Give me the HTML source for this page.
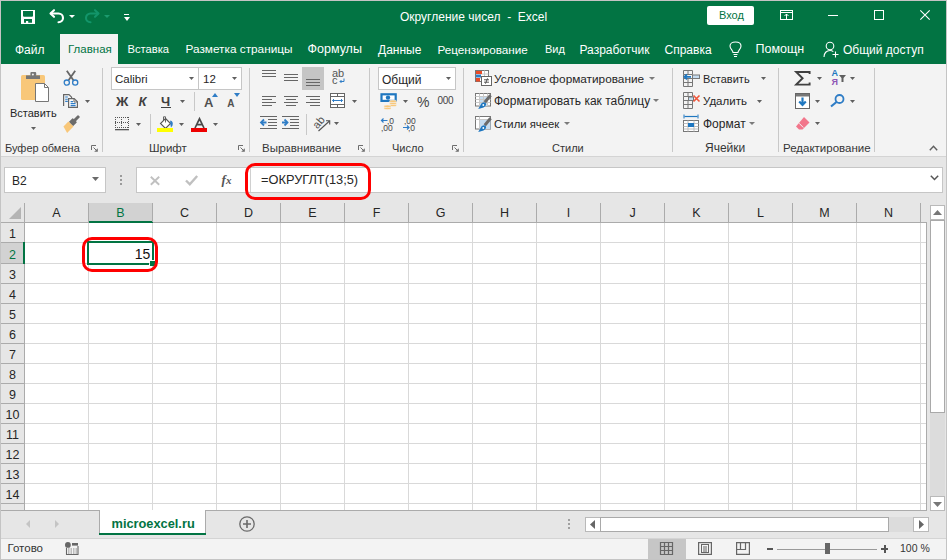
<!DOCTYPE html>
<html><head><meta charset="utf-8">
<style>
*{margin:0;padding:0;box-sizing:border-box}
html,body{width:947px;height:560px;overflow:hidden;background:#e6e6e6;font-family:"Liberation Sans",sans-serif;position:relative}
.a{position:absolute}
svg.a{overflow:visible}
.t{position:absolute;white-space:nowrap;line-height:1}
.box{position:absolute;background:#fff;border:1px solid #c6c6c6}
</style></head><body>
<div class="a" style="left:0px;top:0px;width:947px;height:1px;background:#c4c4c4;"></div>
<div class="a" style="left:0px;top:0px;width:1px;height:560px;background:#c4c4c4;"></div>
<div class="a" style="left:946px;top:0px;width:1px;height:560px;background:#c4c4c4;"></div>
<div class="a" style="left:1px;top:1px;width:945px;height:63px;background:#027443;"></div>
<div class="a" style="left:60px;top:34px;width:58px;height:30px;background:#f3f3f3;"></div>
<svg class="a" style="left:21px;top:10px;" width="14" height="14" viewBox="0 0 14 14"><rect x="0" y="0" width="14" height="14" fill="#fff"/><path d="M2 1H12V6L11.3 6.7H2.7L2 6Z" fill="#027443"/><path d="M3 9H11V12.8H7.2V11H5V12.8H3Z" fill="#027443"/></svg>
<svg class="a" style="left:49px;top:9px;" width="16" height="14" viewBox="0 0 16 14"><path d="M5 1.2L1.5 4.5L5 7.8" fill="none" stroke="#fff" stroke-width="2.1" stroke-linejoin="round" stroke-linecap="round"/><path d="M2 4.5H9.5C12 4.5 14 6.5 14 9C14 11.5 12 13.2 9.5 13.2" fill="none" stroke="#fff" stroke-width="2.1" stroke-linecap="round"/></svg>
<svg class="a" style="left:68.5px;top:15px;" width="6" height="3" viewBox="0 0 6 3"><path d="M0 0H6L3.0 3Z" fill="#fff"/></svg>
<svg class="a" style="left:84px;top:9px;" width="16" height="14" viewBox="0 0 16 14"><path d="M11 1.2L14.5 4.5L11 7.8" fill="none" stroke="#13956a" stroke-width="2.1" stroke-linejoin="round" stroke-linecap="round"/><path d="M14 4.5H6.5C4 4.5 2 6.5 2 9C2 11.5 4 13.2 6.5 13.2" fill="none" stroke="#13956a" stroke-width="2.1" stroke-linecap="round"/></svg>
<svg class="a" style="left:103.5px;top:15px;" width="6" height="3" viewBox="0 0 6 3"><path d="M0 0H6L3.0 3Z" fill="#1c9a6e"/></svg>
<div class="a" style="left:124px;top:14px;width:5px;height:1px;background:#fff;"></div>
<svg class="a" style="left:123.5px;top:16.5px;" width="6" height="4" viewBox="0 0 6 4"><path d="M0 0H6L3.0 4Z" fill="#fff"/></svg>
<div class="t" style="left:400px;top:10.84px;font-size:12px;color:#fff;">Округление чисел &nbsp;-&nbsp; Excel</div>
<div class="a" style="left:707px;top:6px;width:47px;height:19px;background:#fff;border-radius:2px"></div>
<div class="t" style="left:719px;top:10.19px;font-size:11px;color:#027443;">Вход</div>
<svg class="a" style="left:780px;top:10px;" width="13" height="10" viewBox="0 0 13 10"><rect x="0.5" y="0.5" width="12" height="9" fill="none" stroke="#fff"/><path d="M0.5 2.5H12.5" stroke="#fff"/><path d="M6.5 4V9.5" stroke="#fff"/><path d="M4.5 6L6.5 4L8.5 6" fill="none" stroke="#fff"/></svg>
<div class="a" style="left:828px;top:15px;width:10px;height:1px;background:#fff;"></div>
<svg class="a" style="left:874px;top:10px;" width="10" height="10" viewBox="0 0 10 10"><rect x="0.5" y="0.5" width="9" height="9" fill="none" stroke="#fff"/></svg>
<svg class="a" style="left:920px;top:10px;" width="10" height="10" viewBox="0 0 10 10"><path d="M0.3 0.3L9.7 9.7M9.7 0.3L0.3 9.7" stroke="#fff" stroke-width="1.1"/></svg>
<div class="t" style="left:15px;top:43.54px;font-size:12px;color:#fff;">Файл</div>
<div class="t" style="left:68px;top:43.97px;font-size:11.5px;color:#027443;">Главная</div>
<div class="t" style="left:127.5px;top:44.22px;font-size:11.2px;color:#fff;">Вставка</div>
<div class="t" style="left:185.5px;top:43.71px;font-size:11.8px;color:#fff;">Разметка страницы</div>
<div class="t" style="left:307.5px;top:43.12px;font-size:12.5px;color:#fff;">Формулы</div>
<div class="t" style="left:378px;top:43.54px;font-size:12px;color:#fff;">Данные</div>
<div class="t" style="left:437.5px;top:43.80px;font-size:11.7px;color:#fff;">Рецензирование</div>
<div class="t" style="left:545px;top:44.39px;font-size:11px;color:#fff;">Вид</div>
<div class="t" style="left:579.5px;top:43.54px;font-size:12px;color:#fff;">Разработчик</div>
<div class="t" style="left:664.5px;top:43.54px;font-size:12px;color:#fff;">Справка</div>
<div class="t" style="left:755.5px;top:43.12px;font-size:12.5px;color:#fff;">Помощн</div>
<div class="t" style="left:843px;top:43.54px;font-size:12px;color:#fff;">Общий доступ</div>
<svg class="a" style="left:729px;top:41px;" width="13" height="17" viewBox="0 0 13 17"><path d="M4 11.5C4 9.5 1 8 1 5C1 2.8 3 1 6.5 1C10 1 12 2.8 12 5C12 8 9 9.5 9 11.5Z" fill="none" stroke="#fff" stroke-width="1.1"/><path d="M4.5 13.5H8.5M5 15.5H8" stroke="#fff" stroke-width="1.1"/></svg>
<svg class="a" style="left:823px;top:41px;" width="17" height="17" viewBox="0 0 17 17"><circle cx="7" cy="5" r="3.8" fill="none" stroke="#fff" stroke-width="1.1"/><path d="M1 16C1 12 3.5 9.5 7 9.5C8.5 9.5 9.5 10 10.3 10.6" fill="none" stroke="#fff" stroke-width="1.1"/><path d="M12.5 10.5V16.5M9.5 13.5H15.5" stroke="#fff" stroke-width="1.1"/></svg>
<div class="a" style="left:1px;top:64px;width:945px;height:92px;background:#f3f3f3;"></div>
<div class="a" style="left:1px;top:156px;width:945px;height:1px;background:#d4d4d4;"></div>
<div class="a" style="left:102px;top:68px;width:1px;height:84px;background:#c8c8c8;"></div>
<div class="a" style="left:249px;top:68px;width:1px;height:84px;background:#c8c8c8;"></div>
<div class="a" style="left:369px;top:68px;width:1px;height:84px;background:#c8c8c8;"></div>
<div class="a" style="left:463px;top:68px;width:1px;height:84px;background:#c8c8c8;"></div>
<div class="a" style="left:672px;top:68px;width:1px;height:84px;background:#c8c8c8;"></div>
<div class="a" style="left:778px;top:68px;width:1px;height:84px;background:#c8c8c8;"></div>
<div class="a" style="left:874px;top:68px;width:1px;height:84px;background:#c8c8c8;"></div>
<div class="t" style="left:5px;top:143.19px;font-size:11px;color:#363636;">Буфер обмена</div>
<svg class="a" style="left:91px;top:145px;" width="7" height="7" viewBox="0 0 7 7"><path d="M0.5 5V0.5H5" fill="none" stroke="#6d6d6d"/><path d="M2.5 2.5L6 6" stroke="#6d6d6d"/><path d="M6.8 3.2V6.8H3.2Z" fill="#6d6d6d"/></svg>
<div class="t" style="left:149px;top:142.77px;font-size:11.5px;color:#363636;">Шрифт</div>
<svg class="a" style="left:238px;top:145px;" width="7" height="7" viewBox="0 0 7 7"><path d="M0.5 5V0.5H5" fill="none" stroke="#6d6d6d"/><path d="M2.5 2.5L6 6" stroke="#6d6d6d"/><path d="M6.8 3.2V6.8H3.2Z" fill="#6d6d6d"/></svg>
<div class="t" style="left:262px;top:142.77px;font-size:11.5px;color:#363636;">Выравнивание</div>
<svg class="a" style="left:358px;top:145px;" width="7" height="7" viewBox="0 0 7 7"><path d="M0.5 5V0.5H5" fill="none" stroke="#6d6d6d"/><path d="M2.5 2.5L6 6" stroke="#6d6d6d"/><path d="M6.8 3.2V6.8H3.2Z" fill="#6d6d6d"/></svg>
<div class="t" style="left:392px;top:143.19px;font-size:11px;color:#363636;">Число</div>
<svg class="a" style="left:452px;top:145px;" width="7" height="7" viewBox="0 0 7 7"><path d="M0.5 5V0.5H5" fill="none" stroke="#6d6d6d"/><path d="M2.5 2.5L6 6" stroke="#6d6d6d"/><path d="M6.8 3.2V6.8H3.2Z" fill="#6d6d6d"/></svg>
<div class="t" style="left:552px;top:143.19px;font-size:11px;color:#363636;">Стили</div>
<div class="t" style="left:705px;top:142.34px;font-size:12px;color:#363636;">Ячейки</div>
<div class="t" style="left:783px;top:142.77px;font-size:11.5px;color:#363636;">Редактирование</div>
<svg class="a" style="left:929px;top:145px;" width="9" height="6" viewBox="0 0 9 6"><path d="M0.8 5.2L4.5 1.2L8.2 5.2" fill="none" stroke="#5f5f5f" stroke-width="1.4"/></svg>
<svg class="a" style="left:20px;top:71px;" width="30" height="32" viewBox="0 0 30 32"><rect x="1" y="4" width="24" height="25" rx="1.6" fill="#f8c779"/><rect x="6" y="4.4" width="14" height="3.6" fill="#767676"/><rect x="10.4" y="1" width="5.8" height="4" rx="1" fill="#767676"/><circle cx="12.9" cy="3.6" r="1" fill="#f3f3f3"/><path d="M15.5 12.5H24.5L28.5 16.5V30.5H15.5Z" fill="#fff" stroke="#767676"/><path d="M24.5 12.5V16.5H28.5" fill="none" stroke="#767676"/></svg>
<div class="t" style="left:10px;top:107.69px;font-size:11px;color:#262626;">Вставить</div>
<svg class="a" style="left:31.0px;top:127px;" width="5" height="3" viewBox="0 0 5 3"><path d="M0 0H5L2.5 3Z" fill="#5f5f5f"/></svg>
<svg class="a" style="left:63px;top:70px;" width="16" height="16" viewBox="0 0 16 16"><path d="M3.8 0.8L10.6 10.6M12.2 0.8L5.4 10.6" stroke="#666" stroke-width="1.8"/><circle cx="3.8" cy="12.6" r="2.6" fill="none" stroke="#2f7dc6" stroke-width="1.3"/><circle cx="12.2" cy="12.6" r="2.6" fill="none" stroke="#2f7dc6" stroke-width="1.3"/></svg>
<svg class="a" style="left:63px;top:94px;" width="15" height="14" viewBox="0 0 15 14"><path d="M0.6 12V0.6H6L8.6 3.2V4.5" fill="none" stroke="#666" stroke-width="1.2"/><path d="M2.2 3H4.8M2.2 5.2H4.8M2.2 7.4H4.8" stroke="#2f7dc6" stroke-width="1.1"/><path d="M5.6 4.6H11.2L14.4 7.8V13.4H5.6Z" fill="#fff" stroke="#666" stroke-width="1.2"/><path d="M11 4.6V8H14.4" fill="none" stroke="#666" stroke-width="1"/><path d="M7.6 7.6H10M7.6 9.6H12.6M7.6 11.6H12.6" stroke="#2f7dc6" stroke-width="1.1"/></svg>
<svg class="a" style="left:85.0px;top:100px;" width="5" height="3" viewBox="0 0 5 3"><path d="M0 0H5L2.5 3Z" fill="#5f5f5f"/></svg>
<svg class="a" style="left:63px;top:116px;" width="17" height="15" viewBox="0 0 17 15"><g transform="translate(9,7) rotate(-45)"><rect x="3.5" y="-1.5" width="6.5" height="3" rx="0.8" fill="#6b6b6b"/><rect x="-1.5" y="-3" width="5.5" height="6" rx="0.6" fill="#6b6b6b"/><path d="M-1.5 -3.6H-8.5L-10.5 3.6H-1.5Z" fill="#f8c779"/></g></svg>
<div class="box" style="left:111px;top:67px;width:88px;height:23px"></div>
<div class="box" style="left:198px;top:67px;width:44px;height:23px"></div>
<div class="t" style="left:115px;top:74.27px;font-size:11.5px;color:#262626;">Calibri</div>
<svg class="a" style="left:189.0px;top:77px;" width="5" height="3" viewBox="0 0 5 3"><path d="M0 0H5L2.5 3Z" fill="#5f5f5f"/></svg>
<div class="t" style="left:203px;top:74.27px;font-size:11.5px;color:#262626;">12</div>
<svg class="a" style="left:232.0px;top:77px;" width="5" height="3" viewBox="0 0 5 3"><path d="M0 0H5L2.5 3Z" fill="#5f5f5f"/></svg>
<div class="t" style="left:115.5px;top:95.00px;font-size:13px;color:#404040;font-weight:bold;transform:scaleX(1.05);transform-origin:0 0">Ж</div>
<div class="t" style="left:138.5px;top:95.00px;font-size:13px;color:#404040;font-style:italic;font-weight:bold">К</div>
<div class="t" style="left:161px;top:95.00px;font-size:13px;color:#404040;font-weight:bold">Ч</div>
<div class="a" style="left:161px;top:107px;width:10px;height:1.3px;background:#404040;"></div>
<svg class="a" style="left:180.0px;top:100px;" width="5" height="3" viewBox="0 0 5 3"><path d="M0 0H5L2.5 3Z" fill="#5f5f5f"/></svg>
<div class="a" style="left:194px;top:92px;width:1px;height:19px;background:#c8c8c8;"></div>
<div class="t" style="left:204px;top:96.00px;font-size:13px;color:#505050;font-weight:bold">A</div>
<svg class="a" style="left:212px;top:93px;" width="6" height="4" viewBox="0 0 6 4"><path d="M0 4L3 0L6 4Z" fill="#2f7dc6"/></svg>
<div class="t" style="left:227.2px;top:98.53px;font-size:10px;color:#505050;font-weight:bold">A</div>
<svg class="a" style="left:234px;top:93px;" width="6" height="4" viewBox="0 0 6 4"><path d="M0 0L6 0L3 4Z" fill="#2f7dc6"/></svg>
<svg class="a" style="left:115px;top:117px;" width="14" height="14" viewBox="0 0 14 14"><rect x="0" y="0" width="1" height="1" fill="#555"/><rect x="2" y="0" width="1" height="1" fill="#555"/><rect x="4" y="0" width="1" height="1" fill="#555"/><rect x="6" y="0" width="1" height="1" fill="#555"/><rect x="8" y="0" width="1" height="1" fill="#555"/><rect x="10" y="0" width="1" height="1" fill="#555"/><rect x="12" y="0" width="1" height="1" fill="#555"/><rect x="0" y="5" width="1" height="1" fill="#555"/><rect x="2" y="5" width="1" height="1" fill="#555"/><rect x="4" y="5" width="1" height="1" fill="#555"/><rect x="6" y="5" width="1" height="1" fill="#555"/><rect x="8" y="5" width="1" height="1" fill="#555"/><rect x="10" y="5" width="1" height="1" fill="#555"/><rect x="12" y="5" width="1" height="1" fill="#555"/><rect x="0" y="10" width="1" height="1" fill="#555"/><rect x="2" y="10" width="1" height="1" fill="#555"/><rect x="4" y="10" width="1" height="1" fill="#555"/><rect x="6" y="10" width="1" height="1" fill="#555"/><rect x="8" y="10" width="1" height="1" fill="#555"/><rect x="10" y="10" width="1" height="1" fill="#555"/><rect x="12" y="10" width="1" height="1" fill="#555"/><rect x="0" y="0" width="1" height="1" fill="#555"/><rect x="0" y="2" width="1" height="1" fill="#555"/><rect x="0" y="4" width="1" height="1" fill="#555"/><rect x="0" y="6" width="1" height="1" fill="#555"/><rect x="0" y="8" width="1" height="1" fill="#555"/><rect x="0" y="10" width="1" height="1" fill="#555"/><rect x="6" y="0" width="1" height="1" fill="#555"/><rect x="6" y="2" width="1" height="1" fill="#555"/><rect x="6" y="4" width="1" height="1" fill="#555"/><rect x="6" y="6" width="1" height="1" fill="#555"/><rect x="6" y="8" width="1" height="1" fill="#555"/><rect x="6" y="10" width="1" height="1" fill="#555"/><rect x="13" y="0" width="1" height="1" fill="#555"/><rect x="13" y="2" width="1" height="1" fill="#555"/><rect x="13" y="4" width="1" height="1" fill="#555"/><rect x="13" y="6" width="1" height="1" fill="#555"/><rect x="13" y="8" width="1" height="1" fill="#555"/><rect x="13" y="10" width="1" height="1" fill="#555"/><rect x="0" y="12" width="14" height="1.3" fill="#555"/></svg>
<svg class="a" style="left:136.0px;top:123px;" width="5" height="3" viewBox="0 0 5 3"><path d="M0 0H5L2.5 3Z" fill="#5f5f5f"/></svg>
<div class="a" style="left:150px;top:114px;width:1px;height:20px;background:#c8c8c8;"></div>
<svg class="a" style="left:157px;top:115px;" width="17" height="17" viewBox="0 0 17 17"><path d="M8.5 3.5L13.5 8.5L8.5 13.5L3.5 8.5Z" fill="#fff" stroke="#555" stroke-width="1.1"/><path d="M6.5 5.5V1.8H8.5V7.5" fill="none" stroke="#555" stroke-width="0.9"/><path d="M13.2 5.5C15.5 5.8 16.4 8 15.4 10.8L14 12.5L13.2 8.5Z" fill="#2f7dc6"/><rect x="0" y="13" width="16" height="4" fill="#ffff00"/></svg>
<svg class="a" style="left:179.0px;top:123px;" width="5" height="3" viewBox="0 0 5 3"><path d="M0 0H5L2.5 3Z" fill="#5f5f5f"/></svg>
<svg class="a" style="left:194px;top:117.5px;" width="11" height="10" viewBox="0 0 11 10"><path d="M1 10L5.5 0.8L10 10M2.8 6.6H8.2" fill="none" stroke="#4a4a4a" stroke-width="1.7"/></svg>
<div class="a" style="left:191px;top:128px;width:16px;height:4px;background:#ee0000;"></div>
<svg class="a" style="left:213.0px;top:123px;" width="5" height="3" viewBox="0 0 5 3"><path d="M0 0H5L2.5 3Z" fill="#5f5f5f"/></svg>
<div class="a" style="left:262px;top:70px;width:14px;height:1px;background:#666;"></div>
<div class="a" style="left:262px;top:73px;width:14px;height:1px;background:#666;"></div>
<div class="a" style="left:262px;top:76px;width:14px;height:1px;background:#666;"></div>
<div class="a" style="left:284px;top:74px;width:14px;height:1px;background:#666;"></div>
<div class="a" style="left:284px;top:77px;width:14px;height:1px;background:#666;"></div>
<div class="a" style="left:284px;top:80px;width:14px;height:1px;background:#666;"></div>
<div class="a" style="left:302px;top:67px;width:22px;height:23px;background:#c5c5c5;"></div>
<div class="a" style="left:306px;top:79px;width:14px;height:1px;background:#666;"></div>
<div class="a" style="left:306px;top:82px;width:14px;height:1px;background:#666;"></div>
<div class="a" style="left:306px;top:85px;width:14px;height:1px;background:#666;"></div>
<div class="t" style="left:332px;top:67.69px;font-size:11px;color:#555;">ab</div>
<div class="t" style="left:332px;top:75.19px;font-size:11px;color:#555;">c</div>
<svg class="a" style="left:339px;top:78px;" width="6" height="6" viewBox="0 0 6 6"><path d="M5 0.5V3.5H1M2.5 2L1 3.5L2.5 5" fill="none" stroke="#2f7dc6" stroke-width="1"/></svg>
<div class="a" style="left:262px;top:96px;width:14px;height:1px;background:#666;"></div>
<div class="a" style="left:262px;top:99px;width:10px;height:1px;background:#666;"></div>
<div class="a" style="left:262px;top:102px;width:14px;height:1px;background:#666;"></div>
<div class="a" style="left:262px;top:105px;width:10px;height:1px;background:#666;"></div>
<div class="a" style="left:284px;top:96px;width:14px;height:1px;background:#666;"></div>
<div class="a" style="left:286px;top:99px;width:10px;height:1px;background:#666;"></div>
<div class="a" style="left:284px;top:102px;width:14px;height:1px;background:#666;"></div>
<div class="a" style="left:286px;top:105px;width:10px;height:1px;background:#666;"></div>
<div class="a" style="left:306px;top:96px;width:14px;height:1px;background:#666;"></div>
<div class="a" style="left:310px;top:99px;width:10px;height:1px;background:#666;"></div>
<div class="a" style="left:306px;top:102px;width:14px;height:1px;background:#666;"></div>
<div class="a" style="left:310px;top:105px;width:10px;height:1px;background:#666;"></div>
<svg class="a" style="left:330px;top:93px;" width="15" height="15" viewBox="0 0 15 15"><rect x="0.5" y="0.5" width="14" height="14" fill="#fff" stroke="#666"/><path d="M0.5 3.5H14.5M0.5 11.5H14.5M7.5 0.5V3.5M7.5 11.5V14.5" stroke="#666"/><path d="M2.5 7.5H12.5" stroke="#2f7dc6"/><path d="M4 6L2.5 7.5L4 9M11 6L12.5 7.5L11 9" fill="none" stroke="#2f7dc6"/></svg>
<svg class="a" style="left:352.0px;top:100px;" width="5" height="3" viewBox="0 0 5 3"><path d="M0 0H5L2.5 3Z" fill="#5f5f5f"/></svg>
<svg class="a" style="left:260px;top:116px;" width="17" height="14" viewBox="0 0 17 14"><path d="M0 0.5H17M8 3.5H17M8 6.5H17M8 9.5H17M0 12.5H17" stroke="#666"/><path d="M1.5 6.5H6.5" stroke="#2f7dc6" stroke-width="2"/><path d="M4 3.5L1 6.5L4 9.5" fill="none" stroke="#2f7dc6" stroke-width="1.8"/></svg>
<svg class="a" style="left:282px;top:116px;" width="17" height="14" viewBox="0 0 17 14"><path d="M0 0.5H17M8 3.5H17M8 6.5H17M8 9.5H17M0 12.5H17" stroke="#666"/><path d="M0 6.5H5" stroke="#2f7dc6" stroke-width="2"/><path d="M2.5 3.5L5.5 6.5L2.5 9.5" fill="none" stroke="#2f7dc6" stroke-width="1.8"/></svg>
<div class="a" style="left:306px;top:114px;width:1px;height:21px;background:#c8c8c8;"></div>
<svg class="a" style="left:314px;top:116px;" width="17" height="15" viewBox="0 0 17 15"><text x="0" y="0" font-family="Liberation Sans" font-size="11" fill="#505050" transform="translate(3.5,13.5) rotate(-50)">ab</text><path d="M4.5 15L15.5 5" stroke="#505050" stroke-width="1.1"/><path d="M12 4.8H15.7V8.5" fill="none" stroke="#505050" stroke-width="1.1"/></svg>
<svg class="a" style="left:334.0px;top:122px;" width="5" height="3" viewBox="0 0 5 3"><path d="M0 0H5L2.5 3Z" fill="#5f5f5f"/></svg>
<div class="box" style="left:378px;top:67px;width:78px;height:23px"></div>
<div class="t" style="left:382px;top:73.84px;font-size:12px;color:#262626;">Общий</div>
<svg class="a" style="left:446.0px;top:77px;" width="5" height="3" viewBox="0 0 5 3"><path d="M0 0H5L2.5 3Z" fill="#5f5f5f"/></svg>
<svg class="a" style="left:380px;top:93px;" width="18" height="17" viewBox="0 0 18 17"><rect x="1.5" y="1.3" width="14.2" height="6.6" fill="#fff" stroke="#1f77c0" stroke-width="2.2"/><circle cx="8" cy="4.6" r="2.2" fill="#1f77c0"/><g fill="#f8c779" stroke="#f3f3f3" stroke-width="0.6"><ellipse cx="13" cy="12.3" rx="3.6" ry="1.3"/><ellipse cx="13" cy="10.3" rx="3.6" ry="1.3"/><ellipse cx="13" cy="8.3" rx="3.6" ry="1.3"/><ellipse cx="7.5" cy="15.3" rx="3.6" ry="1.3"/><ellipse cx="7.5" cy="13.3" rx="3.6" ry="1.3"/></g></svg>
<svg class="a" style="left:403.0px;top:100px;" width="5" height="3" viewBox="0 0 5 3"><path d="M0 0H5L2.5 3Z" fill="#5f5f5f"/></svg>
<div class="t" style="left:417px;top:94.65px;font-size:14px;color:#444;">%</div>
<div class="t" style="left:437.5px;top:95.53px;font-size:10px;color:#444;transform:scaleY(1.05);transform-origin:0 100%;letter-spacing:-0.3px">000</div>
<div class="t" style="left:387px;top:116.80px;font-size:8.5px;color:#444;">,0</div>
<div class="t" style="left:381px;top:123.80px;font-size:8.5px;color:#444;">,00</div>
<svg class="a" style="left:381px;top:118px;" width="7" height="5" viewBox="0 0 7 5"><path d="M0.5 2.5H6.5M2.5 0.5L0.5 2.5L2.5 4.5" fill="none" stroke="#2f7dc6" stroke-width="1.2"/></svg>
<div class="t" style="left:404px;top:116.80px;font-size:8.5px;color:#444;">,00</div>
<div class="t" style="left:408px;top:123.80px;font-size:8.5px;color:#444;">,0</div>
<svg class="a" style="left:403px;top:125px;" width="7" height="5" viewBox="0 0 7 5"><path d="M0 2.5H6M4 0.5L6 2.5L4 4.5" fill="none" stroke="#2f7dc6" stroke-width="1.2"/></svg>
<svg class="a" style="left:475px;top:70px;" width="17" height="16" viewBox="0 0 17 16"><rect x="0.5" y="0.5" width="13" height="11" fill="#fff" stroke="#777"/><path d="M5 4H13.5M5 8H13.5M9.5 0.5V11.5" stroke="#c8c8c8"/><rect x="1" y="1" width="6" height="3" fill="#ea4b27"/><rect x="1" y="4.5" width="5" height="3" fill="#2f7dc6"/><rect x="1" y="8" width="4" height="3.5" fill="#ea4b27"/><rect x="6.5" y="6.5" width="10" height="9" fill="#fff" stroke="#666"/><path d="M9 9.8H14M9 12.2H14M12.5 8.3L10.5 13.7" stroke="#444" stroke-width="0.9"/></svg>
<div class="t" style="left:494px;top:73.51px;font-size:11.8px;color:#262626;">Условное форматирование</div>
<svg class="a" style="left:649.0px;top:77px;" width="6" height="3" viewBox="0 0 6 3"><path d="M0 0H6L3.0 3Z" fill="#7a7a7a"/></svg>
<svg class="a" style="left:475px;top:93px;" width="17" height="17" viewBox="0 0 17 17"><rect x="0.5" y="0.5" width="15" height="12.5" fill="#fff" stroke="#777"/><rect x="4.5" y="3.5" width="8" height="9.5" fill="#c5dcf0"/><path d="M0.5 3.5H15.5M0.5 6.5H15.5M0.5 9.5H15.5M4.5 0.5V13M8.5 0.5V13M12.5 0.5V13" stroke="#c8c8c8"/><path d="M15.6 2.2L9.8 9.2" stroke="#6b6b6b" stroke-width="3"/><path d="M10.8 10.2C9.6 8.6 7.2 9.2 6 11.2L3.2 16C5.8 15.7 8.3 15 9.8 13.6C11 12.5 11.4 11.2 10.8 10.2Z" fill="#1f77c0"/><circle cx="8.3" cy="12" r="0.9" fill="#fff"/></svg>
<div class="t" style="left:494px;top:95.34px;font-size:12px;color:#262626;">Форматировать как таблицу</div>
<svg class="a" style="left:652.5px;top:99px;" width="6" height="3" viewBox="0 0 6 3"><path d="M0 0H6L3.0 3Z" fill="#7a7a7a"/></svg>
<svg class="a" style="left:475px;top:116px;" width="17" height="17" viewBox="0 0 17 17"><rect x="0.5" y="0.5" width="15" height="12.5" fill="#fff" stroke="#777"/><rect x="4.5" y="3.5" width="11" height="9.5" fill="#c5dcf0"/><path d="M0.5 3.5H15.5M4.5 0.5V13" stroke="#c8c8c8"/><path d="M15.6 2.2L9.8 9.2" stroke="#6b6b6b" stroke-width="3"/><path d="M10.8 10.2C9.6 8.6 7.2 9.2 6 11.2L3.2 16C5.8 15.7 8.3 15 9.8 13.6C11 12.5 11.4 11.2 10.8 10.2Z" fill="#1f77c0"/><circle cx="8.3" cy="12" r="0.9" fill="#fff"/></svg>
<div class="t" style="left:494px;top:119.43px;font-size:11.3px;color:#262626;">Стили ячеек</div>
<svg class="a" style="left:564.0px;top:122px;" width="6" height="3" viewBox="0 0 6 3"><path d="M0 0H6L3.0 3Z" fill="#7a7a7a"/></svg>
<svg class="a" style="left:683px;top:70px;" width="17" height="17" viewBox="0 0 17 17"><path d="M0.5 0.5H9.5V4.5H0.5ZM0.5 4.5V16.5H9.5V8.5M0.5 12.5H9.5M0.5 8.5H9.5M5 0.5V4.5M5 8.5V16.5" fill="none" stroke="#777"/><rect x="9.5" y="5" width="7" height="3.5" fill="#c5dcf0" stroke="#777"/><path d="M1.5 6.8H8M4 4.3L1.5 6.8L4 9.3" fill="none" stroke="#1f77c0" stroke-width="1.8"/></svg>
<div class="t" style="left:703px;top:73.69px;font-size:11px;color:#262626;">Вставить</div>
<svg class="a" style="left:761.0px;top:77px;" width="5" height="3" viewBox="0 0 5 3"><path d="M0 0H5L2.5 3Z" fill="#5f5f5f"/></svg>
<svg class="a" style="left:683px;top:92px;" width="17" height="17" viewBox="0 0 17 17"><path d="M0.5 0.5H9.5V4.5H0.5ZM0.5 4.5V16.5H9.5V8.5M0.5 12.5H9.5M0.5 8.5H9.5M5 0.5V4.5M5 8.5V16.5" fill="none" stroke="#777"/><rect x="5.5" y="5" width="5" height="3.5" fill="#c5dcf0" stroke="#777"/><path d="M10.5 3.5L16.5 9.5M16.5 3.5L10.5 9.5" stroke="#f0553a" stroke-width="1.6"/></svg>
<div class="t" style="left:703px;top:95.77px;font-size:11.5px;color:#262626;">Удалить</div>
<svg class="a" style="left:757.0px;top:100px;" width="5" height="3" viewBox="0 0 5 3"><path d="M0 0H5L2.5 3Z" fill="#5f5f5f"/></svg>
<svg class="a" style="left:683px;top:114px;" width="17" height="18" viewBox="0 0 17 18"><path d="M1.5 2.5H14.5" stroke="#1f77c0" stroke-width="1.2"/><path d="M1 0.5V4.5M15 0.5V4.5" stroke="#1f77c0"/><rect x="0.5" y="6.5" width="15" height="11" fill="#fff" stroke="#777"/><path d="M0.5 9.5H15.5M0.5 12.5H15.5M0.5 15H15.5M5 6.5V17.5M11 6.5V17.5" stroke="#bdbdbd"/><rect x="5" y="9" width="6" height="4" fill="#1f77c0"/></svg>
<div class="t" style="left:703px;top:118.34px;font-size:12px;color:#262626;">Формат</div>
<svg class="a" style="left:749.0px;top:122px;" width="6" height="3" viewBox="0 0 6 3"><path d="M0 0H6L3.0 3Z" fill="#7a7a7a"/></svg>
<svg class="a" style="left:795px;top:71px;" width="16" height="14" viewBox="0 0 16 14"><path d="M14.6 3V1H1.2L7.6 7.2L1.2 13.6H14.6V11.6" fill="none" stroke="#404040" stroke-width="1.9"/></svg>
<svg class="a" style="left:817.0px;top:77px;" width="5" height="3" viewBox="0 0 5 3"><path d="M0 0H5L2.5 3Z" fill="#5f5f5f"/></svg>
<div class="t" style="left:831.5px;top:69.38px;font-size:9px;color:#1f77c0;font-weight:bold">A</div>
<div class="t" style="left:831.5px;top:78.38px;font-size:9px;color:#8e55b5;font-weight:bold">Я</div>
<svg class="a" style="left:839px;top:75px;" width="7" height="7" viewBox="0 0 7 7"><path d="M0 0H7L4.5 3V7H2.5V3Z" fill="#5f5f5f"/></svg>
<svg class="a" style="left:850.0px;top:77px;" width="5" height="3" viewBox="0 0 5 3"><path d="M0 0H5L2.5 3Z" fill="#5f5f5f"/></svg>
<svg class="a" style="left:795px;top:93px;" width="15" height="16" viewBox="0 0 15 16"><rect x="0.5" y="0.5" width="14" height="15" fill="#fff" stroke="#666"/><rect x="1" y="1" width="13" height="2.5" fill="#777"/><path d="M7.5 4.5V12M4.2 8.5L7.5 12L10.8 8.5" fill="none" stroke="#1f77c0" stroke-width="2.2"/></svg>
<svg class="a" style="left:815.0px;top:100px;" width="5" height="3" viewBox="0 0 5 3"><path d="M0 0H5L2.5 3Z" fill="#5f5f5f"/></svg>
<svg class="a" style="left:830px;top:94px;" width="15" height="13" viewBox="0 0 15 13"><circle cx="9.5" cy="5" r="4" fill="none" stroke="#2f7dc6" stroke-width="1.8"/><path d="M6.5 8L1 12.5" stroke="#2f7dc6" stroke-width="2.2"/></svg>
<svg class="a" style="left:850.0px;top:100px;" width="5" height="3" viewBox="0 0 5 3"><path d="M0 0H5L2.5 3Z" fill="#5f5f5f"/></svg>
<svg class="a" style="left:795px;top:116px;" width="15" height="14" viewBox="0 0 15 14"><path d="M9 1L14.5 6.5L7.5 13.5H4L1 10.5Z" fill="#f2768b"/><path d="M4 7.2L8.3 11.5" stroke="#f3f3f3" stroke-width="1"/></svg>
<svg class="a" style="left:815.0px;top:122px;" width="5" height="3" viewBox="0 0 5 3"><path d="M0 0H5L2.5 3Z" fill="#5f5f5f"/></svg>
<div class="box" style="left:4px;top:167px;width:102px;height:26px"></div>
<div class="t" style="left:12px;top:174.84px;font-size:12px;color:#262626;">B2</div>
<svg class="a" style="left:92.0px;top:177px;" width="7" height="4" viewBox="0 0 7 4"><path d="M0 0H7L3.5 4Z" fill="#6a6a6a"/></svg>
<div class="a" style="left:120px;top:175px;width:2px;height:2px;background:#9a9a9a;"></div>
<div class="a" style="left:120px;top:179px;width:2px;height:2px;background:#9a9a9a;"></div>
<div class="a" style="left:120px;top:183px;width:2px;height:2px;background:#9a9a9a;"></div>
<div class="box" style="left:136px;top:167px;width:807px;height:26px"></div>
<div class="a" style="left:250px;top:168px;width:1px;height:24px;background:#d0d0d0;"></div>
<svg class="a" style="left:150px;top:175.5px;" width="10" height="9.5" viewBox="0 0 10 9.5"><path d="M0.8 0.8L9.2 8.7M9.2 0.8L0.8 8.7" stroke="#c0c0c0" stroke-width="1.9"/></svg>
<svg class="a" style="left:185px;top:175px;" width="13" height="11" viewBox="0 0 13 11"><path d="M1 5.5L4.8 9.3L12.2 1" fill="none" stroke="#c0c0c0" stroke-width="2.4"/></svg>
<div class="t" style="left:221.5px;top:172.50px;font-size:13px;color:#555;font-family:'Liberation Serif';font-style:italic;font-weight:bold">f</div>
<div class="t" style="left:226px;top:175.19px;font-size:11px;color:#555;font-family:'Liberation Serif';font-style:italic;font-weight:bold">x</div>
<div class="t" style="left:261px;top:173.66px;font-size:12.8px;color:#262626;">=ОКРУГЛТ(13;5)</div>
<svg class="a" style="left:930px;top:175px;" width="9" height="6" viewBox="0 0 9 6"><path d="M0.8 0.8L4.5 4.5L8.2 0.8" fill="none" stroke="#555" stroke-width="1.5"/></svg>
<svg class="a" style="left:9px;top:207px;" width="12" height="12" viewBox="0 0 12 12"><path d="M12 0V12H0Z" fill="#b4b4b4"/></svg>
<div class="a" style="left:24px;top:203px;width:1px;height:308px;background:#ababab;"></div>
<div class="a" style="left:1px;top:222px;width:926px;height:1px;background:#ababab;"></div>
<div class="a" style="left:88px;top:203px;width:1px;height:19px;background:#ababab;"></div>
<div class="t" style="left:25px;top:207.42px;width:63px;text-align:center;font-size:12.5px;color:#262626">A</div>
<div class="a" style="left:89px;top:203px;width:63px;height:19px;background:#d2d2d2;"></div>
<div class="a" style="left:89px;top:221px;width:64px;height:2px;background:#027443;"></div>
<div class="a" style="left:152px;top:203px;width:1px;height:19px;background:#ababab;"></div>
<div class="t" style="left:89px;top:207.42px;width:63px;text-align:center;font-size:12.5px;color:#027443">B</div>
<div class="a" style="left:216px;top:203px;width:1px;height:19px;background:#ababab;"></div>
<div class="t" style="left:153px;top:207.42px;width:63px;text-align:center;font-size:12.5px;color:#262626">C</div>
<div class="a" style="left:280px;top:203px;width:1px;height:19px;background:#ababab;"></div>
<div class="t" style="left:217px;top:207.42px;width:63px;text-align:center;font-size:12.5px;color:#262626">D</div>
<div class="a" style="left:344px;top:203px;width:1px;height:19px;background:#ababab;"></div>
<div class="t" style="left:281px;top:207.42px;width:63px;text-align:center;font-size:12.5px;color:#262626">E</div>
<div class="a" style="left:408px;top:203px;width:1px;height:19px;background:#ababab;"></div>
<div class="t" style="left:345px;top:207.42px;width:63px;text-align:center;font-size:12.5px;color:#262626">F</div>
<div class="a" style="left:472px;top:203px;width:1px;height:19px;background:#ababab;"></div>
<div class="t" style="left:409px;top:207.42px;width:63px;text-align:center;font-size:12.5px;color:#262626">G</div>
<div class="a" style="left:536px;top:203px;width:1px;height:19px;background:#ababab;"></div>
<div class="t" style="left:473px;top:207.42px;width:63px;text-align:center;font-size:12.5px;color:#262626">H</div>
<div class="a" style="left:600px;top:203px;width:1px;height:19px;background:#ababab;"></div>
<div class="t" style="left:537px;top:207.42px;width:63px;text-align:center;font-size:12.5px;color:#262626">I</div>
<div class="a" style="left:664px;top:203px;width:1px;height:19px;background:#ababab;"></div>
<div class="t" style="left:601px;top:207.42px;width:63px;text-align:center;font-size:12.5px;color:#262626">J</div>
<div class="a" style="left:728px;top:203px;width:1px;height:19px;background:#ababab;"></div>
<div class="t" style="left:665px;top:207.42px;width:63px;text-align:center;font-size:12.5px;color:#262626">K</div>
<div class="a" style="left:792px;top:203px;width:1px;height:19px;background:#ababab;"></div>
<div class="t" style="left:729px;top:207.42px;width:63px;text-align:center;font-size:12.5px;color:#262626">L</div>
<div class="a" style="left:856px;top:203px;width:1px;height:19px;background:#ababab;"></div>
<div class="t" style="left:793px;top:207.42px;width:63px;text-align:center;font-size:12.5px;color:#262626">M</div>
<div class="a" style="left:920px;top:203px;width:1px;height:19px;background:#ababab;"></div>
<div class="t" style="left:857px;top:207.42px;width:63px;text-align:center;font-size:12.5px;color:#262626">N</div>
<div class="a" style="left:25px;top:223px;width:901px;height:287px;background:#fff;"></div>
<div class="a" style="left:1px;top:242px;width:24px;height:1px;background:#ababab;"></div>
<div class="a" style="left:25px;top:242px;width:901px;height:1px;background:#d9d9d9;"></div>
<div class="a" style="left:1px;top:263px;width:24px;height:1px;background:#ababab;"></div>
<div class="a" style="left:25px;top:263px;width:901px;height:1px;background:#d9d9d9;"></div>
<div class="a" style="left:1px;top:283px;width:24px;height:1px;background:#ababab;"></div>
<div class="a" style="left:25px;top:283px;width:901px;height:1px;background:#d9d9d9;"></div>
<div class="a" style="left:1px;top:303px;width:24px;height:1px;background:#ababab;"></div>
<div class="a" style="left:25px;top:303px;width:901px;height:1px;background:#d9d9d9;"></div>
<div class="a" style="left:1px;top:323px;width:24px;height:1px;background:#ababab;"></div>
<div class="a" style="left:25px;top:323px;width:901px;height:1px;background:#d9d9d9;"></div>
<div class="a" style="left:1px;top:343px;width:24px;height:1px;background:#ababab;"></div>
<div class="a" style="left:25px;top:343px;width:901px;height:1px;background:#d9d9d9;"></div>
<div class="a" style="left:1px;top:363px;width:24px;height:1px;background:#ababab;"></div>
<div class="a" style="left:25px;top:363px;width:901px;height:1px;background:#d9d9d9;"></div>
<div class="a" style="left:1px;top:383px;width:24px;height:1px;background:#ababab;"></div>
<div class="a" style="left:25px;top:383px;width:901px;height:1px;background:#d9d9d9;"></div>
<div class="a" style="left:1px;top:403px;width:24px;height:1px;background:#ababab;"></div>
<div class="a" style="left:25px;top:403px;width:901px;height:1px;background:#d9d9d9;"></div>
<div class="a" style="left:1px;top:423px;width:24px;height:1px;background:#ababab;"></div>
<div class="a" style="left:25px;top:423px;width:901px;height:1px;background:#d9d9d9;"></div>
<div class="a" style="left:1px;top:443px;width:24px;height:1px;background:#ababab;"></div>
<div class="a" style="left:25px;top:443px;width:901px;height:1px;background:#d9d9d9;"></div>
<div class="a" style="left:1px;top:463px;width:24px;height:1px;background:#ababab;"></div>
<div class="a" style="left:25px;top:463px;width:901px;height:1px;background:#d9d9d9;"></div>
<div class="a" style="left:1px;top:483px;width:24px;height:1px;background:#ababab;"></div>
<div class="a" style="left:25px;top:483px;width:901px;height:1px;background:#d9d9d9;"></div>
<div class="a" style="left:1px;top:503px;width:24px;height:1px;background:#ababab;"></div>
<div class="a" style="left:25px;top:503px;width:901px;height:1px;background:#d9d9d9;"></div>
<div class="a" style="left:88px;top:223px;width:1px;height:287px;background:#d9d9d9;"></div>
<div class="a" style="left:152px;top:223px;width:1px;height:287px;background:#d9d9d9;"></div>
<div class="a" style="left:216px;top:223px;width:1px;height:287px;background:#d9d9d9;"></div>
<div class="a" style="left:280px;top:223px;width:1px;height:287px;background:#d9d9d9;"></div>
<div class="a" style="left:344px;top:223px;width:1px;height:287px;background:#d9d9d9;"></div>
<div class="a" style="left:408px;top:223px;width:1px;height:287px;background:#d9d9d9;"></div>
<div class="a" style="left:472px;top:223px;width:1px;height:287px;background:#d9d9d9;"></div>
<div class="a" style="left:536px;top:223px;width:1px;height:287px;background:#d9d9d9;"></div>
<div class="a" style="left:600px;top:223px;width:1px;height:287px;background:#d9d9d9;"></div>
<div class="a" style="left:664px;top:223px;width:1px;height:287px;background:#d9d9d9;"></div>
<div class="a" style="left:728px;top:223px;width:1px;height:287px;background:#d9d9d9;"></div>
<div class="a" style="left:792px;top:223px;width:1px;height:287px;background:#d9d9d9;"></div>
<div class="a" style="left:856px;top:223px;width:1px;height:287px;background:#d9d9d9;"></div>
<div class="a" style="left:920px;top:223px;width:1px;height:287px;background:#d9d9d9;"></div>
<div class="t" style="left:1px;width:23px;text-align:center;top:228.42px;font-size:12.5px;color:#262626">1</div>
<div class="a" style="left:1px;top:243px;width:23px;height:20px;background:#d2d2d2;"></div>
<div class="a" style="left:23px;top:242px;width:2px;height:22px;background:#027443;"></div>
<div class="t" style="left:1px;width:23px;text-align:center;top:249.42px;font-size:12.5px;color:#027443">2</div>
<div class="t" style="left:1px;width:23px;text-align:center;top:269.42px;font-size:12.5px;color:#262626">3</div>
<div class="t" style="left:1px;width:23px;text-align:center;top:289.42px;font-size:12.5px;color:#262626">4</div>
<div class="t" style="left:1px;width:23px;text-align:center;top:309.42px;font-size:12.5px;color:#262626">5</div>
<div class="t" style="left:1px;width:23px;text-align:center;top:329.42px;font-size:12.5px;color:#262626">6</div>
<div class="t" style="left:1px;width:23px;text-align:center;top:349.42px;font-size:12.5px;color:#262626">7</div>
<div class="t" style="left:1px;width:23px;text-align:center;top:369.42px;font-size:12.5px;color:#262626">8</div>
<div class="t" style="left:1px;width:23px;text-align:center;top:389.42px;font-size:12.5px;color:#262626">9</div>
<div class="t" style="left:1px;width:23px;text-align:center;top:409.42px;font-size:12.5px;color:#262626">10</div>
<div class="t" style="left:1px;width:23px;text-align:center;top:429.42px;font-size:12.5px;color:#262626">11</div>
<div class="t" style="left:1px;width:23px;text-align:center;top:449.42px;font-size:12.5px;color:#262626">12</div>
<div class="t" style="left:1px;width:23px;text-align:center;top:469.42px;font-size:12.5px;color:#262626">13</div>
<div class="t" style="left:1px;width:23px;text-align:center;top:489.42px;font-size:12.5px;color:#262626">14</div>
<div class="a" style="left:926px;top:222px;width:1px;height:289px;background:#ababab;"></div>
<div class="a" style="left:1px;top:510px;width:926px;height:1px;background:#ababab;"></div>
<div class="a" style="left:87px;top:241px;width:67px;height:2px;background:#027443;"></div>
<div class="a" style="left:87px;top:263px;width:62px;height:2px;background:#027443;"></div>
<div class="a" style="left:87px;top:241px;width:2px;height:24px;background:#027443;"></div>
<div class="a" style="left:152px;top:241px;width:2px;height:19px;background:#027443;"></div>
<div class="a" style="left:149px;top:260px;width:6px;height:1px;background:#fff;"></div>
<div class="a" style="left:150px;top:261px;width:5px;height:5px;background:#027443;"></div>
<div class="t" style="left:134.8px;top:246.95px;font-size:14px;color:#111;">15</div>
<div class="a" style="left:82px;top:237px;width:76px;height:35px;border:3.4px solid #ff0000;border-radius:10px"></div>
<div class="a" style="left:245px;top:163px;width:126px;height:36.5px;border:3.5px solid #ff0000;border-radius:10px"></div>
<div class="a" style="left:927px;top:203px;width:19px;height:308px;background:#e6e6e6;"></div>
<div class="a" style="left:930px;top:205px;width:15px;height:15px;background:#fff;border:1px solid #b9b9b9"></div>
<svg class="a" style="left:933px;top:210px;" width="9" height="5" viewBox="0 0 9 5"><path d="M0 5L4.5 0L9 5Z" fill="#777"/></svg>
<div class="a" style="left:930px;top:220px;width:15px;height:276px;background:#dcdcdc;"></div>
<div class="a" style="left:930px;top:220px;width:15px;height:193px;background:#fff;border:1px solid #a9a9a9"></div>
<div class="a" style="left:930px;top:496px;width:15px;height:15px;background:#fff;border:1px solid #b9b9b9"></div>
<svg class="a" style="left:933px;top:502px;" width="9" height="5" viewBox="0 0 9 5"><path d="M0 0L9 0L4.5 5Z" fill="#777"/></svg>
<div class="a" style="left:1px;top:511px;width:945px;height:27px;background:#e6e6e6;"></div>
<svg class="a" style="left:26px;top:520px;" width="4" height="8" viewBox="0 0 4 8"><path d="M4 0V8L0 4Z" fill="#c4c4c4"/></svg>
<svg class="a" style="left:55px;top:520px;" width="4" height="8" viewBox="0 0 4 8"><path d="M0 0V8L4 4Z" fill="#c4c4c4"/></svg>
<div class="a" style="left:99px;top:510px;width:1px;height:25px;background:#ababab;"></div>
<div class="a" style="left:205px;top:510px;width:1px;height:25px;background:#ababab;"></div>
<div class="a" style="left:100px;top:510px;width:105px;height:25px;background:#fff;"></div>
<div class="a" style="left:99px;top:533px;width:107px;height:2px;background:#027443;"></div>
<div class="t" style="left:111.5px;top:517.96px;font-size:12.8px;color:#027443;font-weight:bold">microexcel.ru</div>
<svg class="a" style="left:239px;top:516px;" width="16" height="16" viewBox="0 0 16 16"><circle cx="8" cy="8" r="7.2" fill="none" stroke="#6a6a6a" stroke-width="1.3"/><path d="M8 4V12M4 8H12" stroke="#6a6a6a" stroke-width="1.6"/></svg>
<div class="a" style="left:568px;top:519px;width:2px;height:2px;background:#a0a0a0;"></div>
<div class="a" style="left:568px;top:523px;width:2px;height:2px;background:#a0a0a0;"></div>
<div class="a" style="left:568px;top:527px;width:2px;height:2px;background:#a0a0a0;"></div>
<div class="a" style="left:585px;top:517px;width:16px;height:15px;background:#fff;border:1px solid #b9b9b9"></div>
<svg class="a" style="left:590px;top:520px;" width="5" height="9" viewBox="0 0 5 9"><path d="M5 0V9L0 4.5Z" fill="#666"/></svg>
<div class="a" style="left:600px;top:517px;width:313px;height:15px;background:#dcdcdc;"></div>
<div class="a" style="left:600px;top:517px;width:289px;height:15px;background:#fff;border:1px solid #a9a9a9"></div>
<div class="a" style="left:913px;top:517px;width:16px;height:15px;background:#fff;border:1px solid #b9b9b9"></div>
<svg class="a" style="left:919px;top:520px;" width="5" height="9" viewBox="0 0 5 9"><path d="M0 0V9L5 4.5Z" fill="#666"/></svg>
<div class="a" style="left:1px;top:538px;width:945px;height:21px;background:#f3f3f3;"></div>
<div class="a" style="left:1px;top:538px;width:945px;height:1px;background:#d4d4d4;"></div>
<div class="a" style="left:0px;top:559px;width:947px;height:1px;background:#c4c4c4;"></div>
<div class="t" style="left:7.5px;top:542.77px;font-size:11.5px;color:#333;">Готово</div>
<svg class="a" style="left:65px;top:542px;" width="14" height="13" viewBox="0 0 14 13"><circle cx="2.9" cy="2.9" r="2.9" fill="#666"/><rect x="7" y="1" width="6" height="2.6" fill="#666"/><path d="M1.5 6V12.5H13V4" fill="none" stroke="#666" stroke-width="1.1"/><path d="M3 7H12M3 9H12M3 11H12" stroke="#888" stroke-width="1" stroke-dasharray="1.5 1"/></svg>
<div class="a" style="left:648px;top:539px;width:38px;height:20px;background:#c6c6c6;"></div>
<svg class="a" style="left:660px;top:542px;" width="13" height="13" viewBox="0 0 13 13"><path d="M0.5 0.5H12.5V12.5H0.5ZM4.5 0.5V12.5M8.5 0.5V12.5M0.5 4.5H12.5M0.5 8.5H12.5" fill="none" stroke="#666" stroke-width="1.2"/></svg>
<svg class="a" style="left:698px;top:542px;" width="14" height="13" viewBox="0 0 14 13"><rect x="0.6" y="0.6" width="12.8" height="11.8" fill="none" stroke="#666" stroke-width="1.2"/><rect x="3.5" y="2.5" width="7" height="8" fill="none" stroke="#666"/><path d="M5 5H9M5 7H9M5 9H9" stroke="#666" stroke-width="1"/></svg>
<svg class="a" style="left:736px;top:542px;" width="14" height="13" viewBox="0 0 14 13"><path d="M0.6 0.6H13.4V12.4H0.6Z" fill="none" stroke="#666" stroke-width="1.2"/><path d="M4.5 0.6V7.5H0.6M9.5 0.6V7.5H4.5" fill="none" stroke="#666" stroke-width="1.2"/></svg>
<div class="a" style="left:767px;top:548px;width:6px;height:2px;background:#555;"></div>
<div class="a" style="left:777px;top:549px;width:100px;height:1px;background:#9a9a9a;"></div>
<div class="a" style="left:825px;top:543px;width:5px;height:11px;background:#666;"></div>
<div class="a" style="left:881px;top:548px;width:7px;height:2px;background:#555;"></div>
<div class="a" style="left:883.5px;top:545px;width:2px;height:8px;background:#555;"></div>
<div class="t" style="left:900px;top:543.11px;font-size:10.5px;color:#333;">100 %</div>
</body></html>
